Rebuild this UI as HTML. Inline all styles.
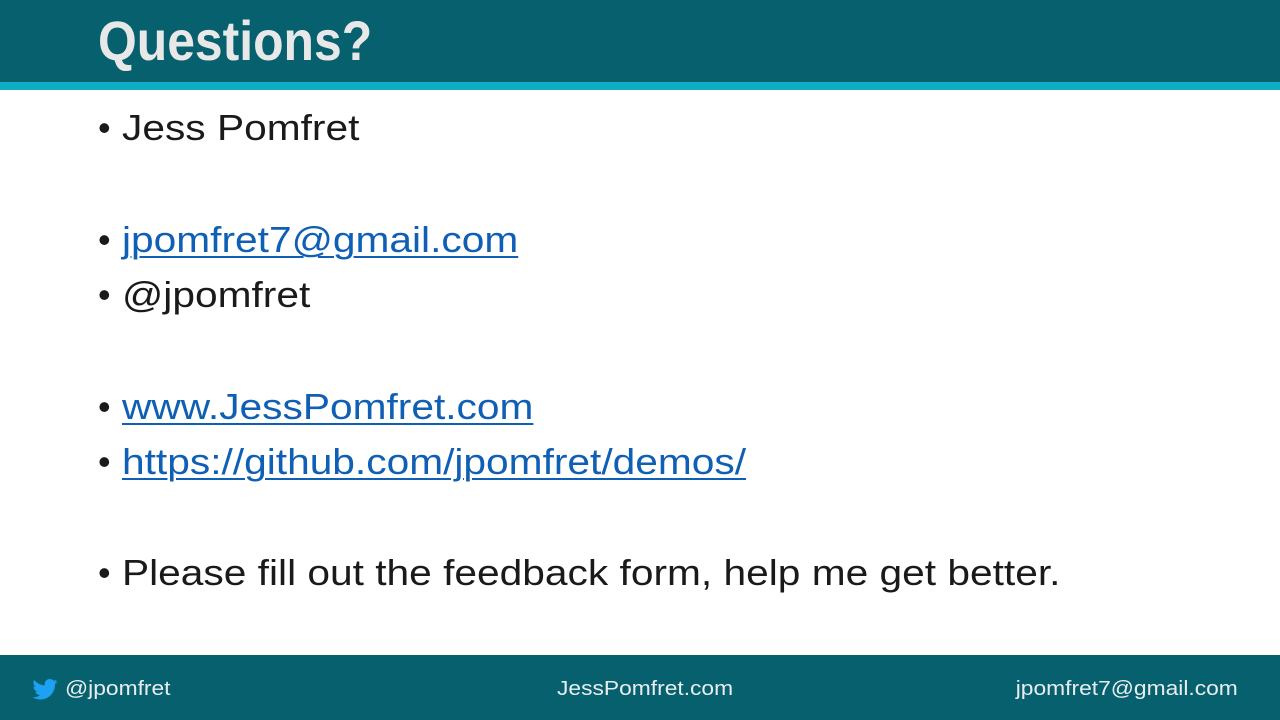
<!DOCTYPE html>
<html><head><meta charset="utf-8"><style>
body{margin:0;width:1280px;height:720px;position:relative;overflow:hidden;background:#fff;font-family:"Liberation Sans",sans-serif}
.hdr{position:absolute;left:0;top:0;width:1280px;height:82px;background:#07606e}
.str{position:absolute;left:0;top:82px;width:1280px;height:8px;background:#0eadc4}
.title{position:absolute;left:98px;top:6px;font-size:56px;font-weight:bold;color:#e8e8e8;transform:scaleX(0.89);transform-origin:left;white-space:nowrap;line-height:70px}
.l{position:absolute;left:98px;font-size:36px;color:#1a1a1a;white-space:nowrap;line-height:44px}
.l .t{display:inline-block;transform:scaleX(1.13);transform-origin:left}
.l a{color:#0f5fb5;text-decoration:underline;text-decoration-thickness:2px;text-underline-offset:4px}
.b{display:inline-block;width:24px}
.ftr{position:absolute;left:0;top:655px;width:1280px;height:65px;background:#07606e;color:#e8eef0;font-size:20px}
.ftr span{position:absolute;top:22px;line-height:24px;white-space:nowrap;transform:scaleX(1.14)}
</style></head><body>
<div class="hdr"></div><div class="str"></div>
<div class="title">Questions?</div>
<div class="l" style="top:106px"><span class="b">•</span><span class="t">Jess Pomfret</span></div>
<div class="l" style="top:218px"><span class="b">•</span><span class="t"><a>jpomfret7@gmail.com</a></span></div>
<div class="l" style="top:273px"><span class="b">•</span><span class="t">@jpomfret</span></div>
<div class="l" style="top:385px"><span class="b">•</span><span class="t"><a>www.JessPomfret.com</a></span></div>
<div class="l" style="top:440px"><span class="b">•</span><span class="t"><a>https://github.com/jpomfret/demos/</a></span></div>
<div class="l" style="top:551px"><span class="b">•</span><span class="t">Please fill out the feedback form, help me get better.</span></div>
<div class="ftr">
<svg style="position:absolute;left:32px;top:24px" width="26" height="21" viewBox="0 0 24 20"><path fill="#1da1f2" d="M24 2.4c-.9.4-1.8.6-2.8.8 1-.6 1.8-1.6 2.2-2.7-1 .6-2 1-3.1 1.2C19.4.7 18.1 0 16.6 0c-2.7 0-4.9 2.2-4.9 4.9 0 .4 0 .8.1 1.1C7.700 5.8 4.1 3.9 1.7.9c-.4.7-.7 1.6-.7 2.5 0 1.7.9 3.2 2.2 4.1-.8 0-1.600-.2-2.200-.6v.1c0 2.400 1.700 4.400 3.900 4.800-.4.1-.8.2-1.300.2-.3 0-.6 0-.9-.1.6 2 2.400 3.400 4.600 3.400-1.700 1.300-3.800 2.100-6.100 2.100-.4 0-.8 0-1.200-.1 2.200 1.400 4.800 2.200 7.500 2.200 9.100 0 14-7.500 14-14v-.6c1-.7 1.800-1.600 2.500-2.500z"/></svg>
<span style="left:65px;transform-origin:left">@jpomfret</span>
<span style="left:557px;transform-origin:left">JessPomfret.com</span>
<span style="right:42px;transform-origin:right">jpomfret7@gmail.com</span>
</div>
</body></html>
